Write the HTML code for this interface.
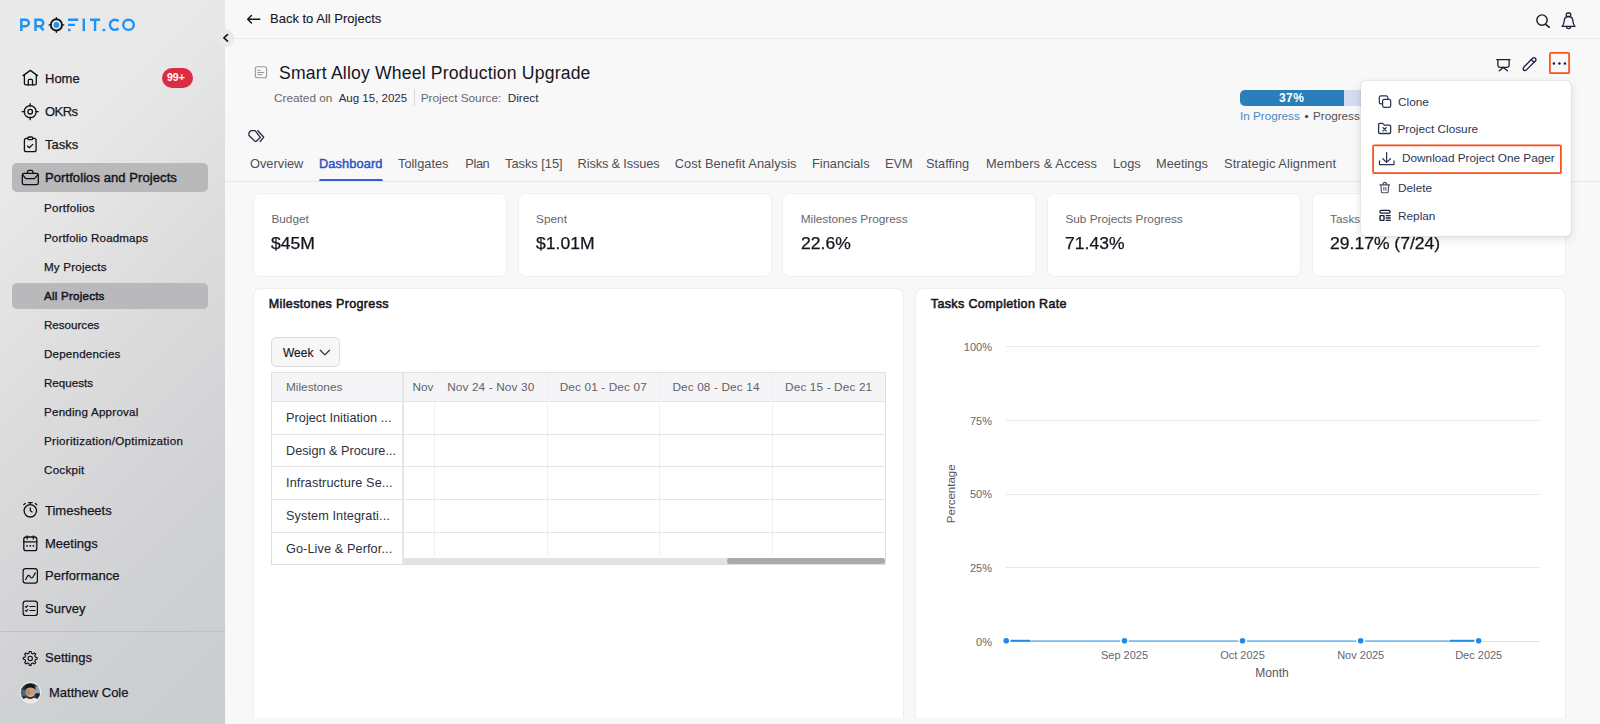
<!DOCTYPE html>
<html>
<head>
<meta charset="utf-8">
<title>Project Dashboard</title>
<style>
*{box-sizing:border-box;margin:0;padding:0}
html,body{width:1600px;height:724px;overflow:hidden}
body{font-family:"Liberation Sans",sans-serif;background:#f8f8f9;color:#1c1c28;position:relative;-webkit-font-smoothing:antialiased}
.abs{position:absolute}
.t{position:absolute;white-space:nowrap;line-height:1}
svg{position:absolute;overflow:visible}
/* sidebar */
#sb{position:absolute;left:0;top:0;width:225px;height:724px;background:linear-gradient(135deg,#eaeaea 0%,#e8e8e8 23%,#dcdcdd 47%,#d0d1d3 75%,#cbccce 100%)}
.nav{font-size:13px;color:#16161f;-webkit-text-stroke:0.25px #16161f}
.sub{font-size:11.6px;color:#16161f;-webkit-text-stroke:0.25px #16161f}
.pill{position:absolute;left:12px;width:196px;background:#b9b9bb;border-radius:5px}
/* main */
.tab{font-size:12.8px;color:#4e4e57;top:158.3px}
.card{position:absolute;top:193px;width:254px;height:84px;background:#fff;border:1px solid #efeff0;border-radius:7.5px}
.card .l{position:absolute;left:17.4px;top:20px;font-size:11.8px;color:#66666e;line-height:1;white-space:nowrap}
.card .v{position:absolute;left:17.4px;-webkit-text-stroke:.25px #16161f;top:42.3px;font-size:15.8px;color:#16161f;line-height:1;white-space:nowrap;transform:scaleX(1.11);transform-origin:left center}
.panel{position:absolute;top:288px;height:430px;background:#fff;border:1px solid #efeff0;border-bottom:none;border-radius:7.5px 7.5px 0 0}
.ph{font-size:12.5px;font-weight:400;color:#16161f;letter-spacing:.36px;-webkit-text-stroke:.55px #16161f}
.mi{font-size:11.8px;color:#2d3452}
.ax{font-size:11px;color:#66666e}
.th{font-size:11.8px;color:#62626b}
.td{font-size:12.7px;color:#30303d}
</style>
</head>
<body>
<!-- ============ SIDEBAR ============ -->
<div id="sb">
  <!-- logo -->
  <div id="logo" class="abs" style="left:19px;top:16px;width:118px;height:18px"></div>

  <div class="pill" style="top:163px;height:29px"></div>
  <div class="pill" style="top:283px;height:26px"></div>

  <div class="t nav" style="left:45px;top:71.5px">Home</div>
  <div class="abs" style="left:162px;top:68px;width:31px;height:20px;border-radius:10px;background:#dc2c44"></div>
  <div class="t" style="left:167px;top:72px;font-size:10.5px;font-weight:700;color:#fff">99+</div>
  <div class="t nav" style="left:45px;top:105px;letter-spacing:-.55px">OKRs</div>
  <div class="t nav" style="left:45px;top:138px">Tasks</div>
  <div class="t nav" style="left:45px;top:171px;letter-spacing:.08px;-webkit-text-stroke:0.45px #16161f">Portfolios and Projects</div>

  <div class="t sub" style="left:44px;top:202px;letter-spacing:0.25px">Portfolios</div>
  <div class="t sub" style="left:44px;top:231.8px;letter-spacing:0.13px">Portfolio Roadmaps</div>
  <div class="t sub" style="left:44px;top:260.9px;letter-spacing:0.2px">My Projects</div>
  <div class="t sub" style="left:44px;top:290.0px;letter-spacing:0.22px;-webkit-text-stroke:0.5px #16161f">All Projects</div>
  <div class="t sub" style="left:44px;top:319.1px;letter-spacing:0px">Resources</div>
  <div class="t sub" style="left:44px;top:348.2px;letter-spacing:0.2px">Dependencies</div>
  <div class="t sub" style="left:44px;top:377.3px;letter-spacing:0px">Requests</div>
  <div class="t sub" style="left:44px;top:406.4px;letter-spacing:0.23px">Pending Approval</div>
  <div class="t sub" style="left:44px;top:435px;letter-spacing:0.285px">Prioritization/Optimization</div>
  <div class="t sub" style="left:44px;top:464px;letter-spacing:0.27px">Cockpit</div>

  <div class="t nav" style="left:45px;top:504px">Timesheets</div>
  <div class="t nav" style="left:45px;top:537px">Meetings</div>
  <div class="t nav" style="left:45px;top:569px">Performance</div>
  <div class="t nav" style="left:45px;top:602px">Survey</div>
  <div class="abs" style="left:0;top:631px;width:225px;height:1px;background:#bfc0c2"></div>
  <div class="t nav" style="left:45px;top:651px">Settings</div>
  <div class="t nav" style="left:49px;top:685.5px">Matthew Cole</div>
</div>

<!-- ============ TOP BAR ============ -->
<div class="abs" style="left:225px;top:38px;width:1375px;height:1px;background:#ebebed"></div>
<div class="t" style="left:270px;top:11.5px;font-size:13px;color:#16161f;-webkit-text-stroke:0.1px #16161f">Back to All Projects</div>

<!-- ============ PROJECT HEADER ============ -->
<div class="t" style="left:279px;top:65.3px;font-size:17.6px;color:#16161f;letter-spacing:.18px">Smart Alloy Wheel Production Upgrade</div>
<div class="t" style="left:274px;top:92.7px;font-size:11.8px;color:#66666e">Created on</div>
<div class="t" style="left:338.7px;top:92.7px;font-size:11.5px;color:#2a2a3c">Aug 15, 2025</div>
<div class="abs" style="left:413.5px;top:89px;width:1px;height:17px;background:#d8d8dc"></div>
<div class="t" style="left:420.7px;top:92.7px;font-size:11.8px;color:#66666e">Project Source:</div>
<div class="t" style="left:507.7px;top:92.7px;font-size:11.8px;color:#2a2a3c">Direct</div>

<!-- progress -->
<div class="abs" style="left:1240px;top:90px;width:140px;height:16px;border-radius:5px;background:#d5dbf0"></div>
<div class="abs" style="left:1240px;top:90px;width:104px;height:16px;border-radius:5px 0 0 5px;background:#2a7fba"></div>
<div class="t" style="left:1279px;top:92px;font-size:12px;font-weight:700;color:#fff;letter-spacing:.45px">37%</div>
<div class="t" style="left:1240px;top:110.2px;font-size:11.7px;color:#4a88c7">In Progress</div><div class="t" style="left:1304.4px;top:110.4px;font-size:11.7px;color:#33333c">•</div><div class="t" style="left:1313px;top:110.2px;font-size:11.7px;color:#505058">Progress</div>

<!-- tabs -->
<div class="abs" style="left:225px;top:181px;width:1375px;height:1px;background:#e9e9ec"></div>
<div class="t tab" style="left:250px">Overview</div>
<div class="t tab" style="left:319px;letter-spacing:.1px;color:#2c52c4;-webkit-text-stroke:0.45px #2c52c4">Dashboard</div>
<div class="abs" style="left:319px;top:179px;width:64px;height:2px;border-radius:2px 2px 0 0;background:#3a5ecb"></div>
<div class="t tab" style="left:398px">Tollgates</div>
<div class="t tab" style="left:465.3px;letter-spacing:-.4px">Plan</div>
<div class="t tab" style="left:505px">Tasks [15]</div>
<div class="t tab" style="left:577.6px;letter-spacing:-.15px">Risks &amp; Issues</div>
<div class="t tab" style="left:674.7px;letter-spacing:.08px">Cost Benefit Analysis</div>
<div class="t tab" style="left:812px">Financials</div>
<div class="t tab" style="left:885px">EVM</div>
<div class="t tab" style="left:926px">Staffing</div>
<div class="t tab" style="left:986px;letter-spacing:.1px">Members &amp; Access</div>
<div class="t tab" style="left:1113px">Logs</div>
<div class="t tab" style="left:1156px">Meetings</div>
<div class="t tab" style="left:1224px;letter-spacing:.1px">Strategic Alignment</div>

<!-- ============ CARDS ============ -->
<div class="card" style="left:253px"><div class="l">Budget</div><div class="v">$45M</div></div>
<div class="card" style="left:517.7px"><div class="l">Spent</div><div class="v">$1.01M</div></div>
<div class="card" style="left:782.3px"><div class="l">Milestones Progress</div><div class="v">22.6%</div></div>
<div class="card" style="left:1047px"><div class="l">Sub Projects Progress</div><div class="v">71.43%</div></div>
<div class="card" style="left:1311.7px"><div class="l">Tasks</div><div class="v">29.17% (7/24)</div></div>

<!-- ============ MILESTONES PANEL ============ -->
<div class="panel" style="left:253px;width:651px"></div>
<div class="t ph" style="left:268.8px;top:298px">Milestones Progress</div>
<div class="abs" style="left:271px;top:337px;width:69px;height:30px;border:1px solid #dcdce0;border-radius:5px;background:#f7f7f8"></div>
<div class="t" style="left:283px;top:347px;font-size:12px;color:#16161f;-webkit-text-stroke:0.15px #16161f">Week</div>
<!--TBL-->
<div class="abs" style="left:271px;top:372px;width:615px;height:193px;border:1px solid #dfdfe2;background:#fff"></div>
<div class="abs" style="left:272px;top:373px;width:613px;height:28px;background:#f5f5f7"></div>
<div class="abs" style="left:271px;top:401px;width:615px;height:1px;background:#e4e4e7"></div>
<div class="abs" style="left:271px;top:434px;width:615px;height:1px;background:#e4e4e7"></div>
<div class="abs" style="left:271px;top:466px;width:615px;height:1px;background:#e4e4e7"></div>
<div class="abs" style="left:271px;top:499px;width:615px;height:1px;background:#e4e4e7"></div>
<div class="abs" style="left:271px;top:532px;width:615px;height:1px;background:#e4e4e7"></div>
<div class="abs" style="left:402px;top:372px;width:2px;height:193px;background:#e6e6e9"></div>
<div class="abs" style="left:434px;top:373px;width:1px;height:183px;background:#f0f0f2"></div>
<div class="abs" style="left:547px;top:373px;width:1px;height:183px;background:#f0f0f2"></div>
<div class="abs" style="left:659px;top:373px;width:1px;height:183px;background:#f0f0f2"></div>
<div class="abs" style="left:772px;top:373px;width:1px;height:183px;background:#f0f0f2"></div>
<div class="t th" style="left:286px;top:381.6px">Milestones</div>
<div class="abs" style="left:404px;top:373px;width:30px;height:28px;overflow:hidden"><div class="t th" style="left:8.5px;top:8.6px">Nov 17 - Nov 23</div></div>
<div class="t th" style="left:430.75px;width:120px;text-align:center;top:381.6px;letter-spacing:.13px">Nov 24 - Nov 30</div>
<div class="t th" style="left:543.3px;width:120px;text-align:center;top:381.6px;letter-spacing:.13px">Dec 01 - Dec 07</div>
<div class="t th" style="left:656px;width:120px;text-align:center;top:381.6px;letter-spacing:.13px">Dec 08 - Dec 14</div>
<div class="t th" style="left:768.7px;width:120px;text-align:center;top:381.6px;letter-spacing:.13px">Dec 15 - Dec 21</div>
<div class="t td" style="left:286px;top:411.8px;letter-spacing:0.05px">Project Initiation ...</div>
<div class="t td" style="left:286px;top:444.8px;letter-spacing:0px">Design &amp; Procure...</div>
<div class="t td" style="left:286px;top:477.3px;letter-spacing:0.12px">Infrastructure Se...</div>
<div class="t td" style="left:286px;top:509.8px;letter-spacing:0.085px">System Integrati...</div>
<div class="t td" style="left:286px;top:542.8px;letter-spacing:0.1px">Go-Live &amp; Perfor...</div>
<div class="abs" style="left:404px;top:558px;width:481px;height:6px;background:#e3e3e5"></div>
<div class="abs" style="left:727px;top:558px;width:158px;height:6px;border-radius:3px;background:#a9a9ab"></div>
<!--/TBL-->

<!-- ============ CHART PANEL ============ -->
<div class="panel" style="left:915px;width:651px"></div>
<div class="t ph" style="left:930.8px;top:298px">Tasks Completion Rate</div>
<!--CHART-->
<svg style="left:915px;top:288px" width="650" height="430" viewBox="915 288 650 430">
<line x1="1006" y1="346.5" x2="1539.5" y2="346.5" stroke="#e9e9ec" stroke-width="1"/>
<line x1="1006" y1="420.5" x2="1539.5" y2="420.5" stroke="#e9e9ec" stroke-width="1"/>
<line x1="1006" y1="494.5" x2="1539.5" y2="494.5" stroke="#e9e9ec" stroke-width="1"/>
<line x1="1006" y1="567.5" x2="1539.5" y2="567.5" stroke="#e9e9ec" stroke-width="1"/>
<line x1="1006" y1="641.5" x2="1539.5" y2="641.5" stroke="#d9dff0" stroke-width="1"/>
<line x1="1006" y1="641" x2="1478.5" y2="641" stroke="#2f97ea" stroke-width="1.2"/>
<line x1="1006" y1="640.7" x2="1030" y2="640.7" stroke="#1e8be6" stroke-width="1.8"/>
<line x1="1450" y1="640.7" x2="1478.5" y2="640.7" stroke="#1e8be6" stroke-width="1.8"/>
<circle cx="1006.2" cy="640.8" r="3.6" fill="#1e8be6" stroke="#fff" stroke-width="1.6"/>
<circle cx="1124.5" cy="640.8" r="3.6" fill="#1e8be6" stroke="#fff" stroke-width="1.6"/>
<circle cx="1242.5" cy="640.8" r="3.6" fill="#1e8be6" stroke="#fff" stroke-width="1.6"/>
<circle cx="1360.7" cy="640.8" r="3.6" fill="#1e8be6" stroke="#fff" stroke-width="1.6"/>
<circle cx="1478.7" cy="640.8" r="3.6" fill="#1e8be6" stroke="#fff" stroke-width="1.6"/>
</svg>
<div class="t ax" style="left:932px;width:60px;text-align:right;top:341.9px">100%</div>
<div class="t ax" style="left:932px;width:60px;text-align:right;top:416.4px">75%</div>
<div class="t ax" style="left:932px;width:60px;text-align:right;top:489.4px">50%</div>
<div class="t ax" style="left:932px;width:60px;text-align:right;top:563.1px">25%</div>
<div class="t ax" style="left:932px;width:60px;text-align:right;top:636.6999999999999px">0%</div>
<div class="t ax" style="left:1084.5px;width:80px;text-align:center;top:650px">Sep 2025</div>
<div class="t ax" style="left:1202.5px;width:80px;text-align:center;top:650px">Oct 2025</div>
<div class="t ax" style="left:1320.7px;width:80px;text-align:center;top:650px">Nov 2025</div>
<div class="t ax" style="left:1438.7px;width:80px;text-align:center;top:650px">Dec 2025</div>
<div class="t" style="left:1232px;width:80px;text-align:center;top:667px;font-size:12px;color:#55555e">Month</div>
<div class="t" style="left:912px;width:80px;text-align:center;top:488px;font-size:11.5px;color:#55555e;transform:rotate(-90deg);transform-origin:center">Percentage</div>
<!--/CHART-->

<!--ICONS-->
<svg style="left:0;top:0" width="1600" height="724" viewBox="0 0 1600 724" fill="none" stroke-linecap="round" stroke-linejoin="round">
<!-- logo -->
<g stroke="#1f92f4" stroke-width="2.4" stroke-linecap="butt" stroke-linejoin="miter">
  <path d="M21.3 31.1V19.7H25.6a3.25 3.25 0 0 1 0 6.5H21.3"/>
  <path d="M35.5 31.1V19.7H40a3.25 3.25 0 0 1 0 6.5H35.5M40.2 26.4L43.6 30.4"/>
  <path d="M68 19.7H78.2M68 24.9H74.9M68 30H70.5"/>
  <path d="M83.8 18.5V31.1"/>
  <path d="M90 19.7H100.1M95.05 19.7V31.1"/>
  <path d="M102.6 30H105.3"/>
  <path d="M118.6 21.2A5.1 5.1 0 1 0 118.6 28.4"/>
  <ellipse cx="128.5" cy="24.8" rx="5.3" ry="5.1"/>
</g>
<circle cx="56.4" cy="24.9" r="5.6" stroke="#15151a" stroke-width="1.9"/>
<path d="M56.4 17.6v1.8M56.4 30.4v1.8M49.1 24.9h1.8M61.9 24.9h1.8" stroke="#15151a" stroke-width="1.4"/>
<circle cx="56.4" cy="24.9" r="2.9" fill="#1f92f4"/>

<!-- nav icons -->
<g stroke="#101014" stroke-width="1.3">
  <!-- home -->
  <path d="M23.1 75.6L30.3 70.4L37.5 75.6"/>
  <path d="M24.4 74.9V83.3a1.6 1.6 0 0 0 1.6 1.6H34.7a1.6 1.6 0 0 0 1.6-1.6V74.9"/>
  <path d="M28.3 84.9V80.4a1 1 0 0 1 1-1h2.2a1 1 0 0 1 1 1V84.9"/>
  <!-- okr -->
  <circle cx="30.2" cy="111.7" r="6"/>
  <circle cx="30.2" cy="111.7" r="2.3"/>
  <path d="M30.2 103.7v2.6M30.2 117.1v2.6M22.2 111.7h2.6M35.6 111.7h2.6"/>
  <!-- tasks -->
  <rect x="24.4" y="138.4" width="11.7" height="13.3" rx="2"/>
  <rect x="27.8" y="137" width="5" height="2.7" rx="1.3" fill="#e6e6e6"/>
  <path d="M27.4 146.1L29.3 147.7L32.8 144.4"/>
  <!-- briefcase -->
  <rect x="22.3" y="173.4" width="16" height="11.3" rx="1.8"/>
  <path d="M27 173.4L28.2 170.4H32.2L33.6 173.4"/>
  <path d="M22.6 174.6L25.7 178.6H34.4L38 174.6"/>
  <!-- stopwatch -->
  <circle cx="30.3" cy="510.8" r="6.2"/>
  <path d="M28.5 502.6H32.1M30.3 502.6V504.4M23.8 504.6L25.2 503.5M35.4 503.5L36.7 504.7"/>
  <path d="M30.3 507.8V510.6L32 511.9"/>
  <!-- calendar -->
  <rect x="23.8" y="537" width="13" height="13.7" rx="2.3"/>
  <path d="M23.8 541.9H36.8M27.2 535.9V538.9M33.3 535.9V538.9"/>
  <path d="M26.9 545.9h.2M30.2 545.9h.2M33.3 545.9h.2" stroke-width="1.6"/>
  <!-- performance -->
  <rect x="23.1" y="568.6" width="14.3" height="14.5" rx="2.6" stroke-width="1.2"/>
  <path d="M25.6 579.5C27 577.5 27.2 575.4 28.7 575.4C30.2 575.4 30.3 578 31.6 578C33.2 578 34 575 35.2 572.9" stroke-width="1.2"/>
  <!-- survey -->
  <rect x="23.1" y="601.2" width="14.3" height="14.3" rx="2.6" stroke-width="1.2"/>
  <path d="M29.9 606.5H35.1M29.9 610.5H35.1M25.3 606.6L26.2 607.3L27.7 605.6M25.3 610.6L26.2 611.3L27.7 609.6" stroke-width="1.2"/>
  <!-- gear -->
  <circle cx="30.2" cy="658.4" r="2.2" stroke-width="1.1"/>
  <path stroke-width="1.1" stroke-linejoin="round" d="M28.96 653.25 L29.27 651.46 L31.13 651.46 L31.44 653.25 L32.97 653.88 L34.45 652.84 L35.76 654.15 L34.72 655.63 L35.35 657.16 L37.14 657.47 L37.14 659.33 L35.35 659.64 L34.72 661.17 L35.76 662.65 L34.45 663.96 L32.97 662.92 L31.44 663.55 L31.13 665.34 L29.27 665.34 L28.96 663.55 L27.43 662.92 L25.95 663.96 L24.64 662.65 L25.68 661.17 L25.05 659.64 L23.26 659.33 L23.26 657.47 L25.05 657.16 L25.68 655.63 L24.64 654.15 L25.95 652.84 L27.43 653.88Z"/>
</g>
<!-- avatar -->
<defs><clipPath id="av"><circle cx="30.4" cy="692.7" r="9.7"/></clipPath><filter id="bl" x="-20%" y="-20%" width="140%" height="140%"><feGaussianBlur stdDeviation="0.55"/></filter></defs>
<circle cx="30.4" cy="692.7" r="10.6" fill="#f3f3f3" stroke="none"/>
<g clip-path="url(#av)" stroke="none"><g filter="url(#bl)">
  <rect x="19" y="681" width="23" height="23" fill="#243a48"/>
  <rect x="34" y="686.5" width="8" height="7" fill="#8fa6b6"/>
  <rect x="36" y="693.5" width="6" height="4" fill="#1c2228"/>
  <rect x="19" y="690" width="6" height="6" fill="#51636e"/>
  <ellipse cx="30.4" cy="704.2" rx="12" ry="6.6" fill="#e8e8e6"/>
  <ellipse cx="30.2" cy="692.6" rx="5" ry="6.4" fill="#c59c80"/>
  <ellipse cx="28" cy="693" rx="2.2" ry="4.5" fill="#a87e63" opacity=".6"/>
  <path d="M24.8 690.2C24 682 36.6 682 35.6 690.2C34.6 686.6 26.4 686.4 24.8 690.2Z" fill="#17120f"/>
  <path d="M25.6 694.4C26 700.6 34.6 700.6 35 694.4C33.4 697.4 27.4 697.4 25.6 694.4Z" fill="#4a3326"/>
  <path d="M28 695.6C29.5 696.8 31.3 696.8 32.8 695.6" stroke="#f2e9e2" stroke-width=".7" fill="none"/>
</g></g>

<!-- collapse button -->
<circle cx="225" cy="38.2" r="9.1" fill="#e9e9e9"/>
<path d="M227.5 34.7L223.9 37.9L227.5 41.1" stroke="#15151a" stroke-width="1.6"/>
<!-- back arrow -->
<path d="M259.8 19.2H247.9M251.4 15.5L247.7 19.2L251.4 22.9" stroke="#15151a" stroke-width="1.45"/>
<!-- doc icon -->
<rect x="255.3" y="66.8" width="11.3" height="11" rx="2" stroke="#97979d" stroke-width="1.1"/>
<path d="M257.6 70.4H260.2M257.6 72.5H263.8M257.6 74.6H262" stroke="#97979d" stroke-width="1"/>
<!-- tag icon -->
<path d="M249 132.6L251.2 130.6H255.1L260.3 137.4L256 141.4H255L248.8 135.3Z" stroke="#2a2a3c" stroke-width="1.3"/>
<path d="M257.8 130.7L263.8 137.2L260.2 141.5" stroke="#2a2a3c" stroke-width="1.3"/>
<!-- search -->
<circle cx="1542" cy="20.1" r="5.2" stroke="#1a1a1a" stroke-width="1.4"/>
<path d="M1546 24.6L1549.4 27.3" stroke="#1a1a1a" stroke-width="1.5"/>
<!-- bell -->
<g stroke="#1a2040" stroke-width="1.3">
  <rect x="1566.2" y="13" width="4.6" height="3.6" rx="1.6"/>
  <path d="M1562.1 26.4C1563.7 25 1564.1 23 1564.2 21C1564.3 18 1566 16.5 1568.5 16.5C1571 16.5 1572.8 18 1572.9 21C1573 23 1573.4 25 1575 26.4Z"/>
  <path d="M1566.3 26.5C1566.5 29.2 1570.5 29.2 1570.7 26.5"/>
</g>
<!-- present -->
<g stroke="#1a1f3d" stroke-width="1.3">
  <path d="M1496.8 59.6H1510" stroke-width="1.4"/>
  <path d="M1497.9 59.6V65.6a1.8 1.8 0 0 0 1.8 1.8H1507.3a1.8 1.8 0 0 0 1.8-1.8V59.6"/>
  <path d="M1503.4 67.4L1499.3 70.8M1503.4 67.4L1507.4 70.8"/>
</g>
<!-- pencil -->
<g stroke="#1a1f3d" stroke-width="1.3" transform="rotate(-45 1529.3 64.3)">
  <path d="M1521.2 64.3C1521.2 63.4 1522.4 62.5 1524 62.4H1535.9a1.9 1.9 0 0 1 0 3.8H1524C1522.4 66.1 1521.2 65.2 1521.2 64.3Z"/>
  <path d="M1534 62.4V66.2"/>
</g>
<!-- more dots -->
<circle cx="1553.9" cy="63.6" r="1.25" fill="#1a1f3d"/><circle cx="1559.4" cy="63.6" r="1.25" fill="#1a1f3d"/><circle cx="1564.9" cy="63.6" r="1.25" fill="#1a1f3d"/>
<!-- week chevron -->
<path d="M320.3 350.3L324.9 354.9L329.5 350.3" stroke="#33333c" stroke-width="1.3"/>
</svg>
<!--/ICONS-->
<!-- ============ DROPDOWN ============ -->
<div class="abs" id="menu" style="left:1361px;top:81px;width:210px;height:155px;background:#fff;border-radius:5px;box-shadow:0 3px 10px rgba(0,0,0,.12),0 0 1.5px rgba(0,0,0,.22)"></div>
<div class="t mi" style="left:1398px;top:96.7px">Clone</div>
<div class="t mi" style="left:1397.5px;top:124px">Project Closure</div>
<div class="t mi" style="left:1402px;top:153.4px">Download Project One Pager</div>
<div class="t mi" style="left:1398px;top:182.7px">Delete</div>
<div class="t mi" style="left:1398px;top:211px">Replan</div>
<!--MICONS-->
<svg style="left:0;top:0" width="1600" height="724" viewBox="0 0 1600 724" fill="none" stroke-linecap="round" stroke-linejoin="round">
<rect x="1549.9" y="52.9" width="19.2" height="20.3" rx="1" stroke="#fb4f1c" stroke-width="1.75"/>
<rect x="1373.1" y="145.4" width="187.8" height="27.6" rx="1" stroke="#fb4f1c" stroke-width="1.75"/>
<g stroke="#2a3352" stroke-width="1.2">
  <!-- clone -->
  <path d="M1382.6 103.8H1380.9a1.6 1.6 0 0 1-1.6-1.6V97.5a1.6 1.6 0 0 1 1.6-1.6H1386.2a1.6 1.6 0 0 1 1.6 1.6V99.3"/>
  <rect x="1382.6" y="99.4" width="8.1" height="7.9" rx="1.6"/>
  <!-- folder x -->
  <path d="M1378.6 124.3a.9.9 0 0 1 .9-.9H1382.6L1384.4 125.1H1389.4a1.2 1.2 0 0 1 1.2 1.2V132.3a1.2 1.2 0 0 1-1.2 1.2H1379.8a1.2 1.2 0 0 1-1.2-1.2Z" stroke-width="1.3"/>
  <path d="M1383.1 127.8L1386.1 130.8M1386.1 127.8L1383.1 130.8" stroke-width="1.3"/>
  <!-- download -->
  <path d="M1386.6 152.7V162.3M1382.8 158.7L1386.6 162.4L1390.5 158.7"/>
  <path d="M1379.5 160.8V164.6H1394V160.8"/>
</g>
<g stroke="#474d66" stroke-width="1.1">
  <!-- trash -->
  <path d="M1379.9 184.9H1389.6M1383 184.7C1383 181.6 1386.6 181.6 1386.6 184.7"/>
  <path d="M1380.9 185.2L1381.4 191.6a1.3 1.3 0 0 0 1.3 1.2H1386.9a1.3 1.3 0 0 0 1.3-1.2L1388.7 185.2"/>
  <path d="M1383.9 187.3V190.3M1385.9 187.3V190.3" stroke-width="1"/>
</g>
<g stroke="#1a1f3d" stroke-width="1.4">
  <!-- replan -->
  <rect x="1380" y="210.4" width="10" height="2.7" rx="1.3"/>
  <rect x="1380" y="215.6" width="4" height="4.8" rx=".6"/>
  <path d="M1386.2 215.6H1390.2M1386.2 218H1390.2M1386.2 220.4H1390.2" stroke-width="1.3"/>
</g>
</svg>
<!--/MICONS-->
</body>
</html>
